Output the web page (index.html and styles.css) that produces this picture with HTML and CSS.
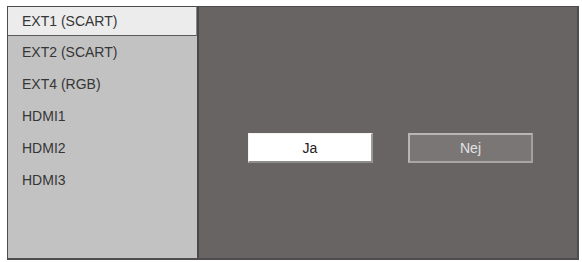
FILE: index.html
```html
<!DOCTYPE html>
<html>
<head>
<meta charset="utf-8">
<link rel="stylesheet" href="styles.css">
</head>
<body>
<div class="frame">
  <ul class="list">
    <li class="item selected">EXT1 (SCART)</li>
    <li class="item">EXT2 (SCART)</li>
    <li class="item">EXT4 (RGB)</li>
    <li class="item">HDMI1</li>
    <li class="item">HDMI2</li>
    <li class="item">HDMI3</li>
  </ul>
  <div class="divider"></div>
  <div class="dialog">
    <div class="btn yes">Ja</div>
    <div class="btn no">Nej</div>
  </div>
</div>
</body>
</html>
```
FILE: styles.css
```css
html, body {
  margin: 0;
  padding: 0;
  background: #ffffff;
}
body {
  padding: 6px 0 0 7px;
  font-family: "Liberation Sans", Arial, sans-serif;
}
.frame {
  box-sizing: border-box;
  width: 572px;
  height: 254px;
  border: 1px solid #4e4c4c;
  border-right-width: 2px;
  border-bottom-width: 2px;
  display: flex;
  background: #686464;
}
.list {
  list-style: none;
  margin: 0;
  padding: 0;
  width: 189px;
  background: #c2c2c2;
  display: flex;
  flex-direction: column;
}
.item {
  box-sizing: border-box;
  height: 32px;
  display: flex;
  align-items: center;
  padding-left: 14px;
  font-size: 14px;
  color: #363636;
}
.item.selected {
  height: 29px;
  background: #ececec;
  border-bottom: 1px solid #5a5a5a;
  border-right: 1px solid #8a8a8a;
  margin-bottom: 0;
}
.divider {
  width: 2px;
  background: #4a4848;
}
.dialog {
  flex: 1;
  display: flex;
  align-items: flex-start;
  padding: 126px 0 0 49px;
  gap: 35px;
}
.btn {
  box-sizing: border-box;
  width: 125px;
  height: 30px;
  display: flex;
  align-items: center;
  justify-content: center;
  font-size: 14px;
}
.btn.yes {
  background: #ffffff;
  color: #222222;
  border: 1px solid #f4f4f4;
  border-right: 2px solid #9a9898;
  border-bottom: 2px solid #8e8c8c;
}
.btn.no {
  background: #7a7676;
  color: #e2e2e2;
  border: 2px solid #b8b5b5;
  border-right-color: #a3a0a0;
  border-bottom-color: #a8a5a5;
}
```
